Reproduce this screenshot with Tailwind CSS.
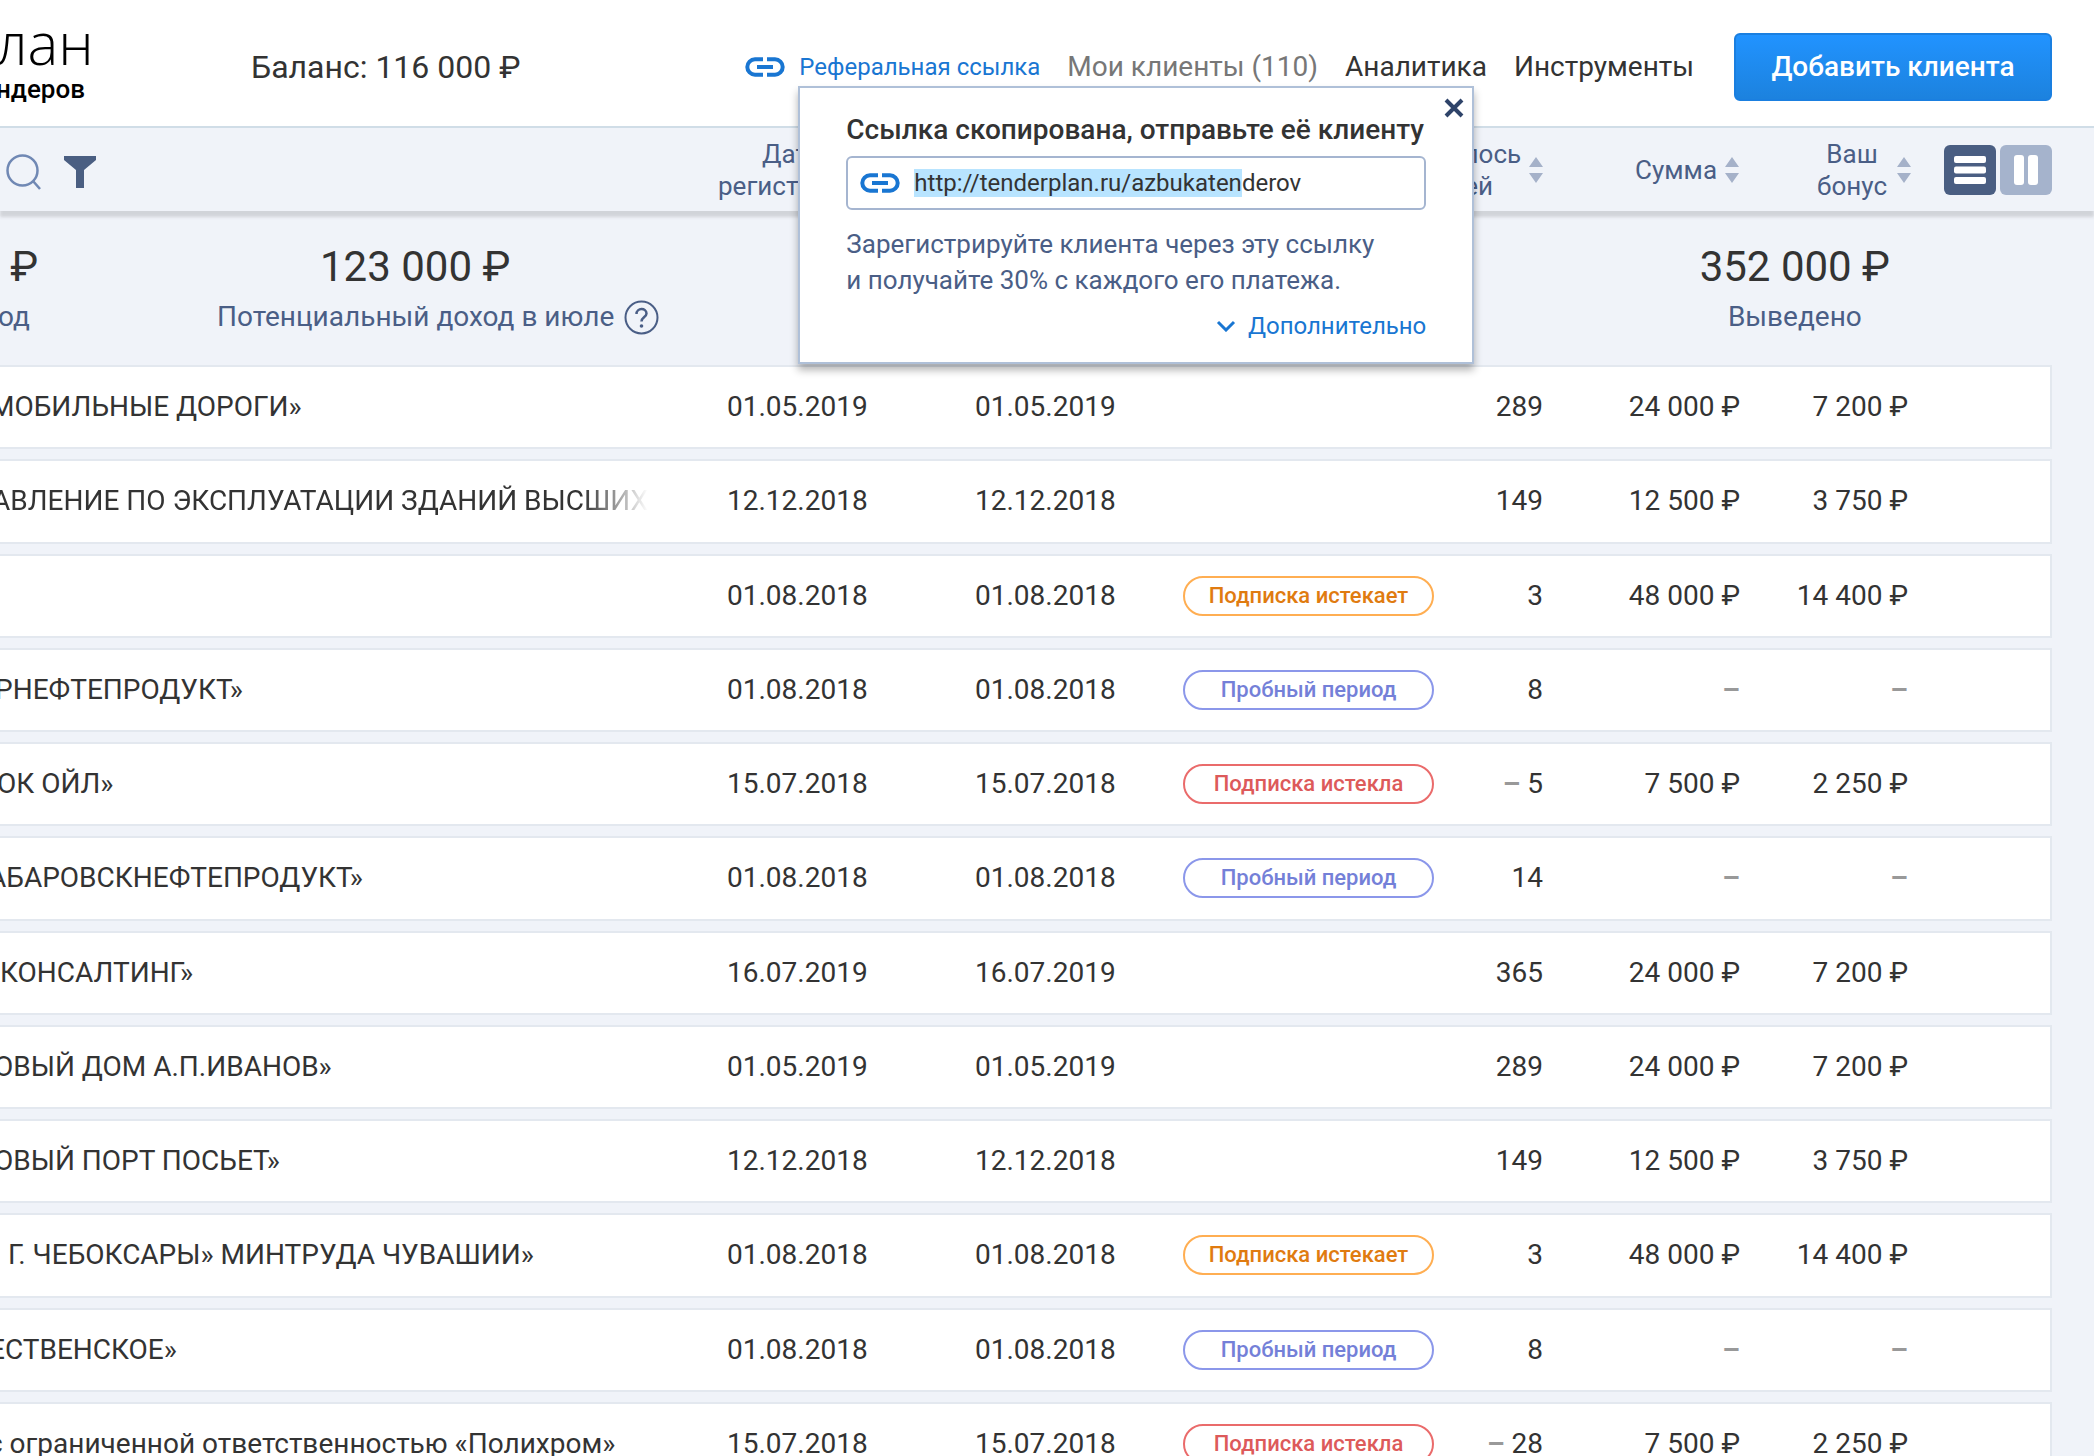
<!DOCTYPE html>
<html lang="ru">
<head>
<meta charset="utf-8">
<title>Тендерплан — Мои клиенты</title>
<script src="https://cdn.jsdelivr.net/npm/@tailwindcss/browser@4"></script>
</head>
<body class="min-h-screen overflow-x-hidden bg-[#f0f3f9] font-['Roboto',sans-serif] text-[28px] leading-8 text-[#333]">

<svg class="hidden" aria-hidden="true">
  <symbol id="link" viewBox="0 0 40 20">
    <path d="M18 2.300H10A7.700 7.700 0 0 0 10 17.700H18M22 2.300H30A7.700 7.700 0 0 1 30 17.700H22" fill="none" stroke="currentColor" stroke-width="4"/>
    <path d="M12 10H28" stroke="currentColor" stroke-width="4"/>
  </symbol>
  <symbol id="sort" viewBox="0 0 14 26">
    <path d="M7 0L14 10H0ZM7 26L14 16H0Z" fill="#a5b1c9"/>
  </symbol>
</svg>

<header class="flex h-32 items-center border-b-2 border-[#d0dde7] bg-white pt-2 pr-[42px]">
  <a href="#" class="-ml-1 w-[255px] shrink-0 pb-4 whitespace-nowrap text-black">
    <span class="block text-[58px] leading-[60px] font-['Open_Sans',sans-serif] font-light">лан</span>
    <span class="block text-[26px] leading-8 font-medium">ндеров</span>
  </a>
  <p class="text-[32px] leading-10 whitespace-nowrap">Баланс: 116 000 ₽</p>
  <nav class="relative ml-auto flex items-center gap-[27px] whitespace-nowrap">
    <a href="#" class="flex items-center gap-3.5 text-2xl leading-8 text-[#1976d2]"><svg class="h-5 w-10"><use href="#link"/></svg>Реферальная ссылка</a>
    <a href="#" class="text-[#777]">Мои клиенты (110)</a>
    <a href="#">Аналитика</a>
    <a href="#">Инструменты</a>

    <section class="absolute top-[35px] left-[53px] z-20 w-[676px] border-2 border-[#afc0d8] bg-white px-[46px] pt-6 pb-5 shadow-[0_6px_8px_rgba(0,0,0,0.3)]" aria-label="Реферальная ссылка">
      <button class="absolute top-2.5 right-2 text-[#2e4369]" aria-label="Закрыть"><svg class="size-5" viewBox="0 0 20 20"><path d="M2 2L18 18M18 2L2 18" stroke="currentColor" stroke-width="4"/></svg></button>
      <h2 class="text-[28px] leading-9 font-medium">Ссылка скопирована, отправьте её клиенту</h2>
      <p class="mt-2 flex h-[54px] items-center gap-3.5 rounded-md border-2 border-[#a5b5d0] px-3 text-2xl leading-7"><svg class="h-5 w-10 text-[#1976d2]"><use href="#link"/></svg><span><mark class="bg-[#b8e4ff] text-inherit">http://tenderplan.ru/azbukaten</mark>derov</span></p>
      <p class="mt-4 text-[26px] leading-9 text-[#4a5e86]">Зарегистрируйте клиента через эту ссылку<br>и получайте 30% с каждого его платежа.</p>
      <button class="mt-3 ml-auto flex items-center gap-3 text-2xl leading-8 text-[#1976d2]"><svg class="h-3 w-5" viewBox="0 0 20 12"><path d="M2 2L10 10L18 2" fill="none" stroke="currentColor" stroke-width="3"/></svg>Дополнительно</button>
    </section>
  </nav>
  <button class="ml-10 h-[68px] w-[318px] shrink-0 rounded-md border-2 border-[#1a7fe0] bg-linear-to-b from-[#2193ff] to-[#1c82de] font-medium text-white">Добавить клиента</button>
</header>

<div class="flex h-[83px] items-center bg-[#f0f3f9] pr-[42px] text-[26px] text-[#4a5e86] shadow-[0_6px_3px_rgba(70,70,70,0.18)]">
  <div class="flex items-center gap-[22px] pt-1 pl-1.5">
    <button aria-label="Поиск"><svg class="size-9" viewBox="0 0 36 36"><circle cx="16.500" cy="16.500" r="15" fill="none" stroke="#7088b4" stroke-width="2.500"/><path d="M27 27L34 35" stroke="#7088b4" stroke-width="2.500"/></svg></button>
    <button aria-label="Фильтр"><svg class="size-8" viewBox="0 0 32 32"><path d="M0 0H32V4L20 14V32H12V14L0 4Z" fill="#4a5e82"/></svg></button>
  </div>
  <button class="ml-auto w-[148px] text-center">Дата<br>регистрации</button>
  <div class="flex w-[1186px] items-center">
    <button class="ml-auto flex items-center gap-2"><span class="text-center">Осталось<br>дней</span><svg class="h-[26px] w-3.5"><use href="#sort"/></svg></button>
    <button class="ml-[92px] flex items-center gap-2">Сумма<svg class="h-[26px] w-3.5"><use href="#sort"/></svg></button>
    <button class="ml-[78px] flex items-center gap-2.5"><span>Ваш<br>бонус</span><svg class="h-[26px] w-3.5"><use href="#sort"/></svg></button>
    <div class="ml-[33px] flex gap-1">
      <button class="flex h-[50px] w-[52px] items-center justify-center rounded-md bg-[#4a5e82]" aria-label="Список"><svg class="h-7 w-8" viewBox="0 0 32 28" fill="#fff"><rect width="32" height="7" rx="2"/><rect y="10.500" width="32" height="7" rx="2"/><rect y="21" width="32" height="7" rx="2"/></svg></button>
      <button class="flex h-[50px] w-[52px] items-center justify-center rounded-md bg-[#a5b3cc]" aria-label="Колонки"><svg class="h-[30px] w-6" viewBox="0 0 24 30" fill="#fff"><rect width="10" height="30" rx="3"/><rect x="14" width="10" height="30" rx="3"/></svg></button>
    </div>
  </div>
</div>

<main class="pr-[42px]">
  <div class="flex h-[144px] items-start pt-8 text-center text-[#4a5e86]">
    <dl class="-ml-2.5 w-12 text-right"><dd class="text-[42px] leading-[48px] text-[#333]">₽</dd><dt class="mt-2.5 mr-2">од</dt></dl>
    <dl class="ml-[179px] flex flex-col"><dd class="mr-[46px] text-[42px] leading-[48px] text-[#333]">123 000 ₽</dd><dt class="mt-2.5 flex h-8 items-center gap-2.5">Потенциальный доход в июле<svg class="size-[35px]" viewBox="0 0 35 35"><circle cx="17.500" cy="17.500" r="16" fill="none" stroke="currentColor" stroke-width="2"/><path d="M12.500 14C12.500 7.500 22.500 7.500 22.500 13.500C22.500 17 17.500 17 17.500 21.500" fill="none" stroke="currentColor" stroke-width="2.500"/><circle cx="17.500" cy="26" r="1.800" fill="currentColor"/></svg></dt></dl>
    <dl class="mr-[162px] ml-auto"><dd class="text-[42px] leading-[48px] text-[#333]">352 000 ₽</dd><dt class="mt-2.5">Выведено</dt></dl>
  </div>

  <table class="h-[1141px] w-full table-fixed border-separate border-spacing-x-0 border-spacing-y-2.5 whitespace-nowrap" aria-label="Клиенты">
    <colgroup><col><col class="w-[248px]"><col class="w-[208px]"><col class="w-[251px]"><col class="w-[109px]"><col class="w-[197px]"><col class="w-[312px]"></colgroup>
    <tbody id="clients"></tbody>
  </table>
</main>

<script>
  const soon = ['Подписка истекает', 'border-[#ffae52] text-[#e07b10]'];
  const trial = ['Пробный период', 'border-[#8b97ea] text-[#7480d8]'];
  const expired = ['Подписка истекла', 'border-[#ea6b6b] text-[#dd5a5a]'];
  const fade = 'mask-r-from-90%';
  const clients = [
    ['МОБИЛЬНЫЕ ДОРОГИ»', -10, '', '01.05.2019', null, '289', '24 000 ₽', '7 200 ₽'],
    ['АВЛЕНИЕ ПО ЭКСПЛУАТАЦИИ ЗДАНИЙ ВЫСШИХ', -8, fade, '12.12.2018', null, '149', '12 500 ₽', '3 750 ₽'],
    ['', 0, '', '01.08.2018', soon, '3', '48 000 ₽', '14 400 ₽'],
    ['РНЕФТЕПРОДУКТ»', -5, '', '01.08.2018', trial, '8', '–', '–'],
    ['ОК ОЙЛ»', -3, '', '15.07.2018', expired, '– 5', '7 500 ₽', '2 250 ₽'],
    ['АБАРОВСКНЕФТЕПРОДУКТ»', -12, '', '01.08.2018', trial, '14', '–', '–'],
    ['КОНСАЛТИНГ»', 0, '', '16.07.2019', null, '365', '24 000 ₽', '7 200 ₽'],
    ['ОВЫЙ ДОМ А.П.ИВАНОВ»', -6, '', '01.05.2019', null, '289', '24 000 ₽', '7 200 ₽'],
    ['ОВЫЙ ПОРТ ПОСЬЕТ»', -6, '', '12.12.2018', null, '149', '12 500 ₽', '3 750 ₽'],
    ['Г. ЧЕБОКСАРЫ» МИНТРУДА ЧУВАШИИ»', 8, '', '01.08.2018', soon, '3', '48 000 ₽', '14 400 ₽'],
    ['ЕСТВЕНСКОЕ»', -11, '', '01.08.2018', trial, '8', '–', '–'],
    ['с ограниченной ответственностью «Полихром»', -12, '', '15.07.2018', expired, '– 28', '7 500 ₽', '2 250 ₽'],
  ];
  const cell = 'border-y-2 border-[#e3e8ef] bg-white p-0';
  const dash = (s) => s.replace('–', '<span class="font-bold text-[#999]">–</span>');
  document.getElementById('clients').innerHTML = clients.map(([name, indent, mask, date, status, days, sum, bonus]) => `
    <tr class="h-[84px]">
      <td class="${cell}"><div class="w-[648px] overflow-hidden ${mask}"><span class="block" style="margin-left:${indent}px">${name || '&nbsp;'}</span></div></td>
      <td class="${cell}">${date}</td>
      <td class="${cell}">${date}</td>
      <td class="${cell}">${status ? `<span class="flex h-10 items-center justify-center rounded-full border-2 text-[22px] font-medium ${status[1]}">${status[0]}</span>` : ''}</td>
      <td class="${cell} text-right">${dash(days)}</td>
      <td class="${cell} text-right">${dash(sum)}</td>
      <td class="${cell} border-r-2 pr-[142px] text-right">${dash(bonus)}</td>
    </tr>`).join('');
</script>
</body>
</html>
